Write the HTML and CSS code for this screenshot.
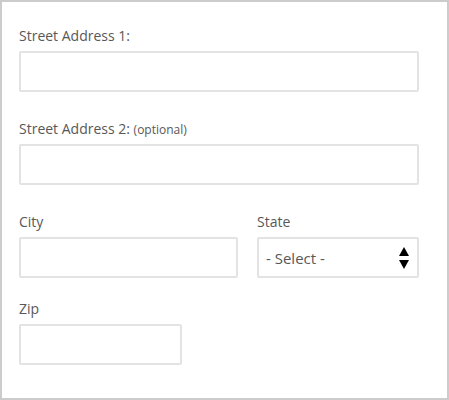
FILE: index.html
```html
<!DOCTYPE html>
<html>
<head>
<meta charset="utf-8">
<link rel="stylesheet" href="styles.css">
</head>
<body>
<form class="panel">
  <div class="field">
    <label class="label">Street Address 1:</label>
    <div class="input w-full"></div>
  </div>
  <div class="field">
    <label class="label">Street Address 2: <span class="opt">(optional)</span></label>
    <div class="input w-full"></div>
  </div>
  <div class="row">
    <div class="field city">
      <label class="label">City</label>
      <div class="input"></div>
    </div>
    <div class="field state">
      <label class="label">State</label>
      <div class="input select">
        <span class="sel-text">- Select -</span>
        <svg class="arrows" width="10" height="22" viewBox="0 0 10 22"><path d="M5 0 L10 9 L0 9 Z" fill="#000"/><path d="M0 13 L10 13 L5 22 Z" fill="#000"/></svg>
      </div>
    </div>
  </div>
  <div class="field zip">
    <label class="label">Zip</label>
    <div class="input"></div>
  </div>
</form>
</body>
</html>
```
FILE: styles.css
```css
html, body {
  margin: 0;
  padding: 0;
  background: #fff;
}
.panel {
  box-sizing: border-box;
  width: 449px;
  height: 400px;
  border: 2px solid #cccccc;
  padding: 24px 0 0 17px;
  font-family: "Open Sans", "DejaVu Sans", sans-serif;
  color: #585858;
}
.field {
  display: flex;
  flex-direction: column;
  margin-bottom: 27px;
}
.label {
  display: block;
  font-size: 14px;
  line-height: 20px;
  height: 20px;
  margin-bottom: 5px;
}
.opt {
  font-size: 12px;
}
.input {
  box-sizing: border-box;
  height: 41px;
  border: 2px solid #e3e3e3;
  border-radius: 2px;
  background: #fff;
}
.w-full {
  width: 400px;
}
.row {
  display: flex;
  gap: 19px;
  width: 400px;
}
.city {
  width: 219px;
}
.state {
  width: 162px;
}
.row .field {
  margin-bottom: 21px;
}
.select {
  display: flex;
  align-items: center;
  justify-content: space-between;
  padding: 0 8px 0 7px;
}
.sel-text {
  font-size: 15px;
  color: #585858;
}
.arrows {
  display: block;
}
.zip .input {
  width: 163px;
}
```
